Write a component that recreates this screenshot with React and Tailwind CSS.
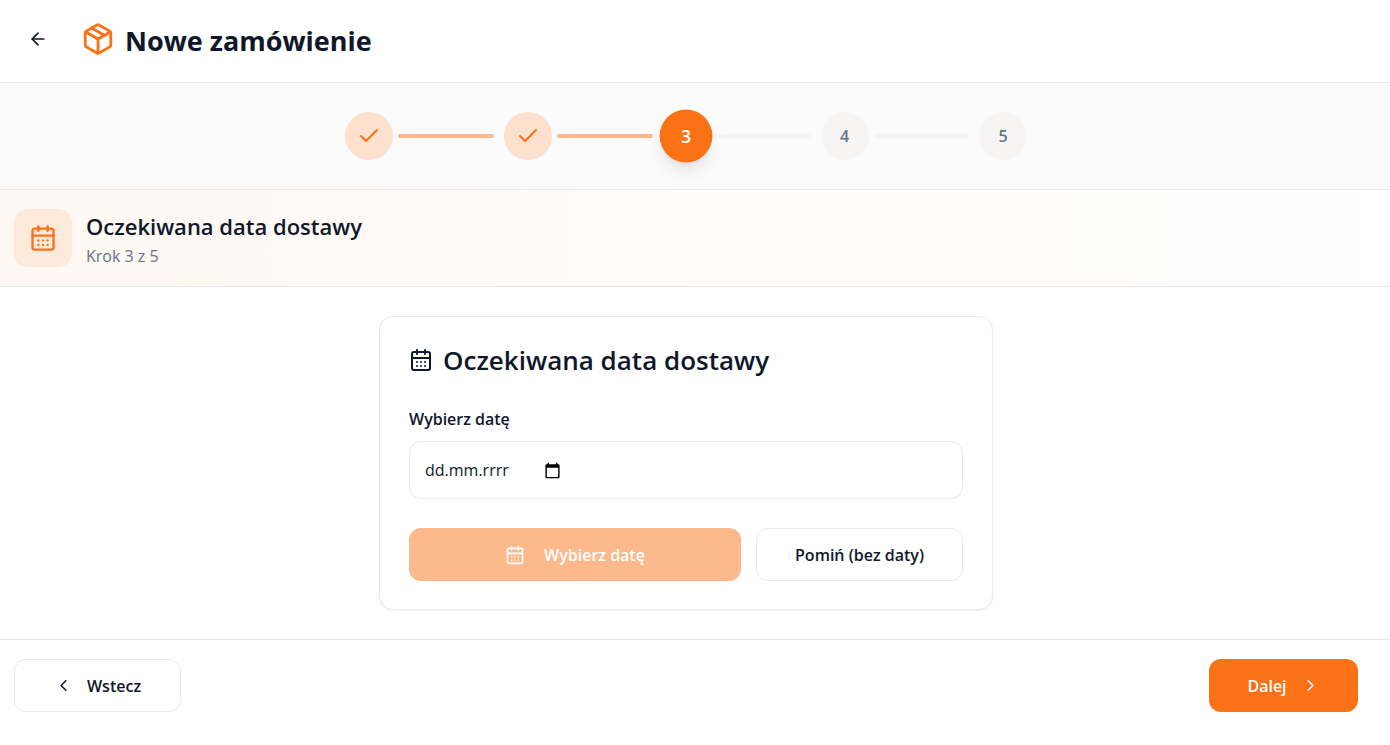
import { ArrowLeft, CalendarDays, Check, ChevronLeft, ChevronRight } from "lucide-react";

const TITLE = "Oczekiwana data dostawy";

function BoxIcon() {
  return (
    <svg
      viewBox="0 0 24 24"
      className="size-[34px] text-[#fb7116]"
      fill="none"
      stroke="currentColor"
      strokeWidth="2"
      strokeLinecap="round"
      strokeLinejoin="round"
      aria-hidden="true"
    >
      <path d="M21 8a2 2 0 0 0-1-1.73l-7-4a2 2 0 0 0-2 0l-7 4A2 2 0 0 0 3 8v8a2 2 0 0 0 1 1.73l7 4a2 2 0 0 0 2 0l7-4A2 2 0 0 0 21 16Z" />
      <path d="m3.3 7 8.7 5 8.7-5" />
      <path d="M12 22V12" />
      <path d="m7.5 4.27 9 5.15" />
    </svg>
  );
}

function Step({ number, state, last }) {
  const circle =
    state === "done"
      ? "bg-[#fee0ce] text-[#fb7116]"
      : state === "active"
        ? "scale-110 bg-[#fb7116] text-white shadow-lg"
        : "bg-[#f6f5f3] text-[#64748b]";
  return (
    <li className={last ? "flex items-center" : "flex flex-1 items-center"}>
      <span className={`flex size-12 shrink-0 items-center justify-center rounded-full text-base font-semibold ${circle}`}>
        {state === "done" ? <Check className="size-6" strokeWidth={2} /> : number}
      </span>
      {!last && (
        <span className={`ml-[5px] h-1 w-24 rounded-full ${state === "done" ? "bg-[#fdb68b]" : "bg-[#f6f5f3]"}`} />
      )}
    </li>
  );
}

export default function App() {
  return (
    <div className="flex min-h-screen flex-col bg-white font-['Open_Sans','Noto_Sans',sans-serif] text-[#0f172a]">
      <header className="flex h-[83px] items-center border-b border-[#ebe7e3] pb-1 pl-3.5">
        <button type="button" aria-label="Wróć" className="flex size-12 items-center justify-center rounded-xl">
          <ArrowLeft className="size-5" />
        </button>
        <div className="ml-[19px] flex items-center gap-2.5">
          <BoxIcon />
          <h1 className="pt-1 text-[27px] leading-9 font-bold">Nowe zamówienie</h1>
        </div>
      </header>

      <nav aria-label="Kroki" className="flex h-[107px] items-center justify-center border-b border-[#e9e8e6] bg-[#fbfbfb] pr-[18px]">
        <ol className="flex w-full max-w-[682px]">
          <Step number={1} state="done" />
          <Step number={2} state="done" />
          <Step number={3} state="active" />
          <Step number={4} state="todo" />
          <Step number={5} state="todo" last />
        </ol>
      </nav>

      <section className="flex h-[97px] items-center gap-3.5 border-b border-[#ebe9e7] bg-linear-to-r from-[#fff8f3] to-white px-3.5">
        <div className="flex size-[58px] items-center justify-center rounded-[14px] bg-[#feeadd] text-[#fb7116]">
          <CalendarDays className="size-7" />
        </div>
        <div className="pt-1">
          <h2 className="text-[22px] leading-8 font-semibold">{TITLE}</h2>
          <p className="text-base leading-7 text-[#64748b]">Krok 3 z 5</p>
        </div>
      </section>

      <main className="flex grow justify-center py-[29px] pr-[18px]">
        <section className="w-full max-w-[614px] self-start rounded-[14px] border border-[#ebe9e7] bg-white px-[29px] pt-[29px] pb-7 shadow-xs">
          <h3 className="flex items-center gap-2.5 text-[26px] leading-7 font-semibold">
            <CalendarDays className="size-6" />
            {TITLE}
          </h3>
          <label htmlFor="delivery-date" className="mt-[33px] block text-base leading-6 font-semibold">
            Wybierz datę
          </label>
          <div className="mt-2.5 flex h-[58px] items-center rounded-xl border border-[#ebe9e7] px-[15px]">
            <input
              id="delivery-date"
              type="text"
              placeholder="dd.mm.rrrr"
              className="w-[119px] text-base placeholder:text-[#0f172a] focus:outline-none"
            />
            <button type="button" aria-label="Otwórz kalendarz" className="text-black">
              <svg viewBox="0 0 24 24" className="size-[17px]" fill="currentColor" aria-hidden="true">
                <path d="M20 3h-1V1h-2v2H7V1H5v2H4c-1.1 0-2 .9-2 2v16c0 1.100.9 2 2 2h16c1.100 0 2-.9 2-2V5c0-1.100-.9-2-2-2zm0 18H4V8h16v13z" />
              </svg>
            </button>
          </div>
          <div className="mt-[29px] flex gap-[15px]">
            <button
              type="button"
              disabled
              className="flex h-[53px] flex-1 items-center justify-center gap-[19px] rounded-xl bg-[#fdb88c] text-base font-semibold text-white"
            >
              <CalendarDays className="size-5" />
              Wybierz datę
            </button>
            <button type="button" className="h-[53px] w-[207px] rounded-xl border border-[#ebe9e7] text-base font-semibold">
              Pomiń (bez daty)
            </button>
          </div>
        </section>
      </main>

      <footer className="flex h-[106px] items-start justify-between border-t border-[#e9e8e6] pt-[19px] pr-8 pl-3.5">
        <button type="button" className="flex h-[53px] w-[167px] items-center justify-center gap-3.5 rounded-xl border border-[#ebe9e7] text-base font-semibold">
          <ChevronLeft className="size-[19px]" />
          Wstecz
        </button>
        <button type="button" className="flex h-[53px] w-[149px] items-center justify-center gap-3.5 rounded-xl bg-[#fb7116] text-base font-semibold text-white">
          Dalej
          <ChevronRight className="size-[19px]" />
        </button>
      </footer>
    </div>
  );
}
